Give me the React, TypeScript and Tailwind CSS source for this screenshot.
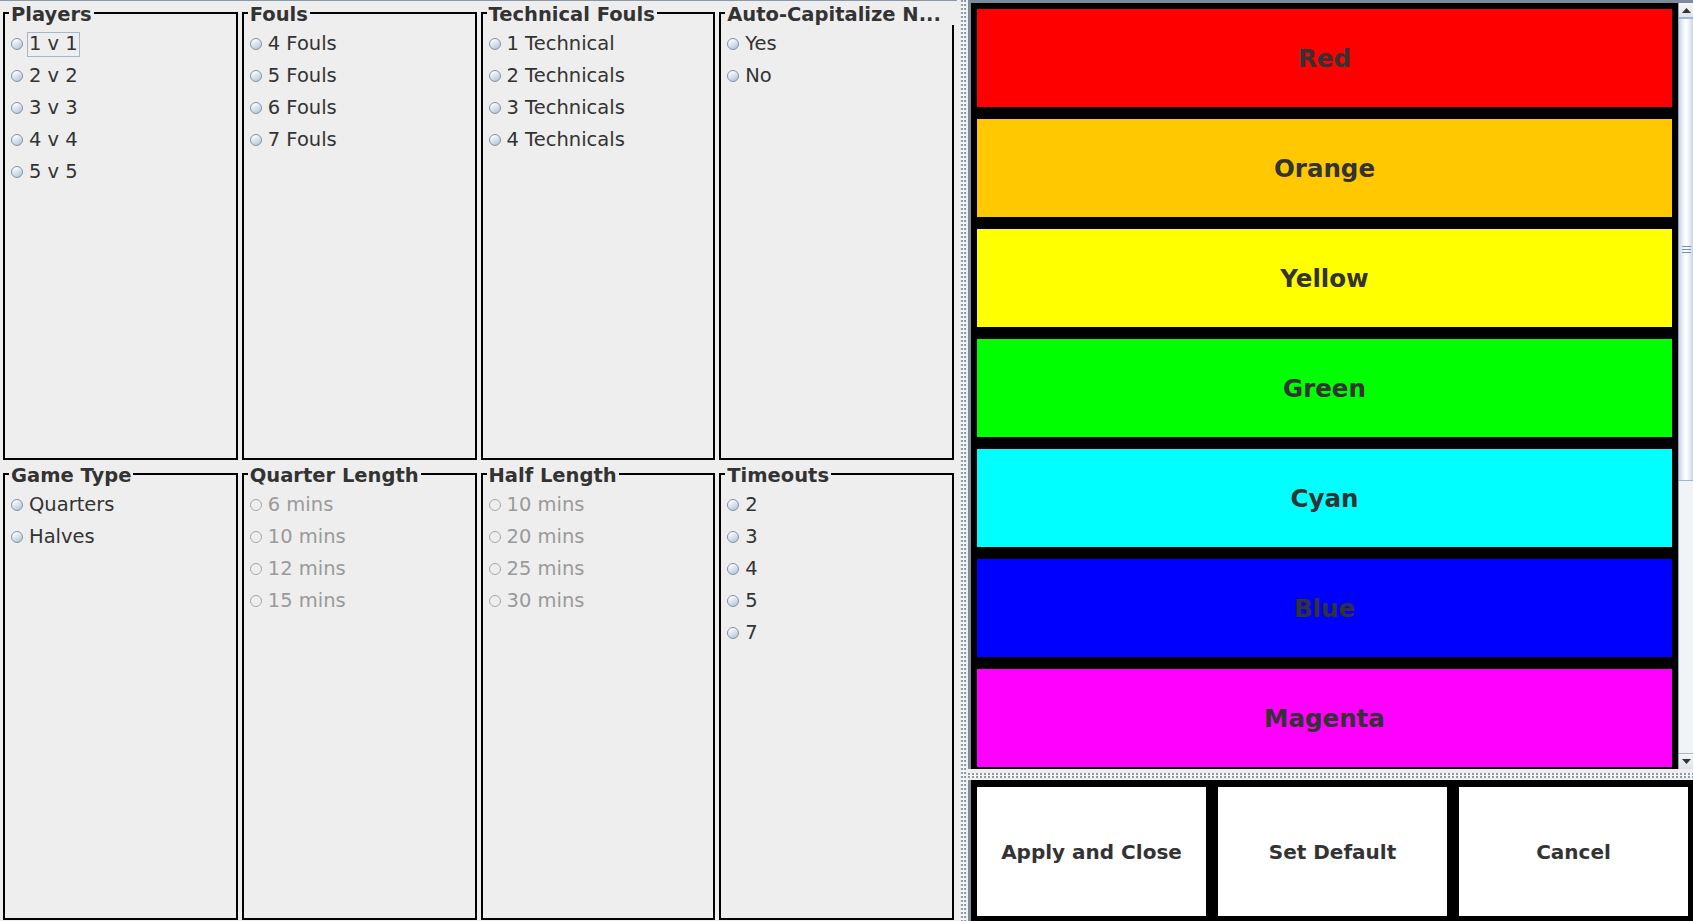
import React from "react";

type Group = {
  title: string;
  items: string[];
  disabled?: boolean;
  focusFirst?: boolean;
  wideTitle?: boolean;
};

const topGroups: Group[] = [
  { title: "Players", items: ["1 v 1", "2 v 2", "3 v 3", "4 v 4", "5 v 5"], focusFirst: true },
  { title: "Fouls", items: ["4 Fouls", "5 Fouls", "6 Fouls", "7 Fouls"] },
  { title: "Technical Fouls", items: ["1 Technical", "2 Technicals", "3 Technicals", "4 Technicals"] },
  { title: "Auto-Capitalize N...", items: ["Yes", "No"], wideTitle: true },
];

const bottomGroups: Group[] = [
  { title: "Game Type", items: ["Quarters", "Halves"] },
  { title: "Quarter Length", items: ["6 mins", "10 mins", "12 mins", "15 mins"], disabled: true },
  { title: "Half Length", items: ["10 mins", "20 mins", "25 mins", "30 mins"], disabled: true },
  { title: "Timeouts", items: ["2", "3", "4", "5", "7"] },
];

const bars = [
  { name: "Red", cls: "bg-[#ff0000]" },
  { name: "Orange", cls: "bg-[#ffc800]" },
  { name: "Yellow", cls: "bg-[#ffff00]" },
  { name: "Green", cls: "bg-[#00ff00]" },
  { name: "Cyan", cls: "bg-[#00ffff]" },
  { name: "Blue", cls: "bg-[#0000ff]" },
  { name: "Magenta", cls: "bg-[#ff00ff]" },
];

function Radio({ label, disabled, focus }: { label: string; disabled?: boolean; focus?: boolean }) {
  return (
    <div className="flex h-[32px] items-center gap-[4px]">
      <span
        className={
          disabled
            ? "-mt-[1px] box-border h-[12px] w-[12px] shrink-0 rounded-full border border-[#a9a9a9] bg-[#eeeeee]"
            : "-mt-[1px] box-border h-[12px] w-[12px] shrink-0 rounded-full border border-[#7f92a7] bg-[linear-gradient(150deg,#ffffff_10%,#bccadb_85%)]"
        }
      />
      <span
        className={
          (focus ? "border-[#a3b8cc] " : "border-transparent ") +
          (disabled ? "text-[#9a9a9a] " : "text-[#333333] ") +
          "flex h-[25px] items-center whitespace-pre border px-[1px] text-[19.5px] leading-none"
        }
      >
        {label}
      </span>
    </div>
  );
}

function Panel({ g }: { g: Group }) {
  return (
    <fieldset className="box-border h-full min-w-0 border-2 border-black">
      <legend
        className={
          g.wideTitle
            ? "ml-[4px] pl-[2px] pr-[13px] pt-[4px] text-[19.5px] font-bold leading-[20px] text-[#333333] whitespace-nowrap"
            : "ml-[4px] pl-[2px] pr-[2px] pt-[4px] text-[19.5px] font-bold leading-[20px] text-[#333333] whitespace-nowrap"
        }
      >
        {g.title}
      </legend>
      <div className="flex flex-col pl-[6px] pt-[3px]">
        {g.items.map((it, i) => (
          <Radio key={it} label={it} disabled={g.disabled} focus={g.focusFirst && i === 0} />
        ))}
      </div>
    </fieldset>
  );
}

function Triangle({ down }: { down?: boolean }) {
  return (
    <svg width="9" height="5" viewBox="0 0 9 5">
      <path d={down ? "M0 0 L9 0 L4.5 5 Z" : "M0 5 L4.5 0 L9 5 Z"} fill="#333333" />
    </svg>
  );
}

export default function App() {
  return (
    <div className="flex h-[921px] w-[1693px] overflow-hidden bg-[#eeeeee] font-['DejaVu_Sans',sans-serif]">
      {/* Left settings area */}
      <div className="box-border flex h-full w-[957px] shrink-0 flex-col border-t border-[#8a99aa] px-[3px]">
        <div className="grid h-[459px] grid-cols-4 gap-x-[4px]">
          {topGroups.map((g) => (
            <Panel key={g.title} g={g} />
          ))}
        </div>
        <div className="mt-[2px] grid h-[458px] grid-cols-4 gap-x-[4px]">
          {bottomGroups.map((g) => (
            <Panel key={g.title} g={g} />
          ))}
        </div>
      </div>

      {/* Vertical splitter */}
      <div className="flex h-full w-[11px] shrink-0 justify-center bg-[#eeeeee] pl-[2px]">
        <div className="h-full w-[5px] bg-[#f4f5f6] bg-[radial-gradient(circle_at_1px_1px,#8e9aa8_0.9px,transparent_1.1px)] bg-[length:3px_4px]" />
      </div>

      {/* Right column */}
      <div className="flex h-full w-[725px] shrink-0 flex-col">
        {/* Scroll pane */}
        <div className="box-border flex h-[769px] shrink-0 border-l-[3px] border-t-[3px] border-[#7d8b9a]">
          <div className="box-border flex h-full w-[707px] flex-col gap-[12px] overflow-hidden bg-black px-[6px] pt-[6px]">
            {bars.map((b) => (
              <div
                key={b.name}
                className={b.cls + " flex h-[98px] shrink-0 items-center justify-center pt-[3px] text-[24.5px] font-bold text-[#333333]"}
              >
                {b.name}
              </div>
            ))}
          </div>
          {/* Scrollbar */}
          <div className="box-border flex h-full w-[15px] flex-col border-l border-[#8fa3b8] bg-[#f1f4f7]">
            <div className="box-border flex h-[16px] shrink-0 items-center justify-center border-b-2 border-[#9ab6da] bg-[linear-gradient(to_bottom,#f6f7f9,#dde3e9)]">
              <Triangle />
            </div>
            <div className="box-border flex h-[462px] shrink-0 flex-col items-center justify-center gap-[2px] border-b border-[#9ab6da] bg-[linear-gradient(to_right,#c7d5e4,#f4f7fa_35%,#ffffff_50%,#f4f7fa_65%,#c7d5e4)]">
              <div className="h-[1px] w-[9px] bg-[#6f90c0]" />
              <div className="h-[1px] w-[9px] bg-[#6f90c0]" />
              <div className="h-[1px] w-[9px] bg-[#6f90c0]" />
            </div>
            <div className="flex-1" />
            <div className="box-border flex h-[16px] shrink-0 items-center justify-center border-t border-[#a9b8c8] bg-[linear-gradient(to_bottom,#f6f7f9,#dde3e9)]">
              <Triangle down />
            </div>
          </div>
        </div>

        {/* Horizontal splitter */}
        <div className="flex h-[11px] shrink-0 flex-col justify-center bg-[#eeeeee] pt-[1px]">
          <div className="h-[5px] w-full bg-[#f4f5f6] bg-[radial-gradient(circle_at_1px_1px,#8e9aa8_0.9px,transparent_1.1px)] bg-[length:4px_3px]" />
        </div>

        {/* Buttons */}
        <div className="box-border flex flex-1 gap-[12px] border-l-[3px] border-[#7d8b9a] bg-black pb-[5px] pl-[6px] pr-[5px] pt-[7px]">
          {["Apply and Close", "Set Default", "Cancel"].map((t) => (
            <div
              key={t}
              className="flex flex-1 items-center justify-center bg-white text-[20px] font-bold text-[#333333]"
            >
              {t}
            </div>
          ))}
        </div>
      </div>
    </div>
  );
}
